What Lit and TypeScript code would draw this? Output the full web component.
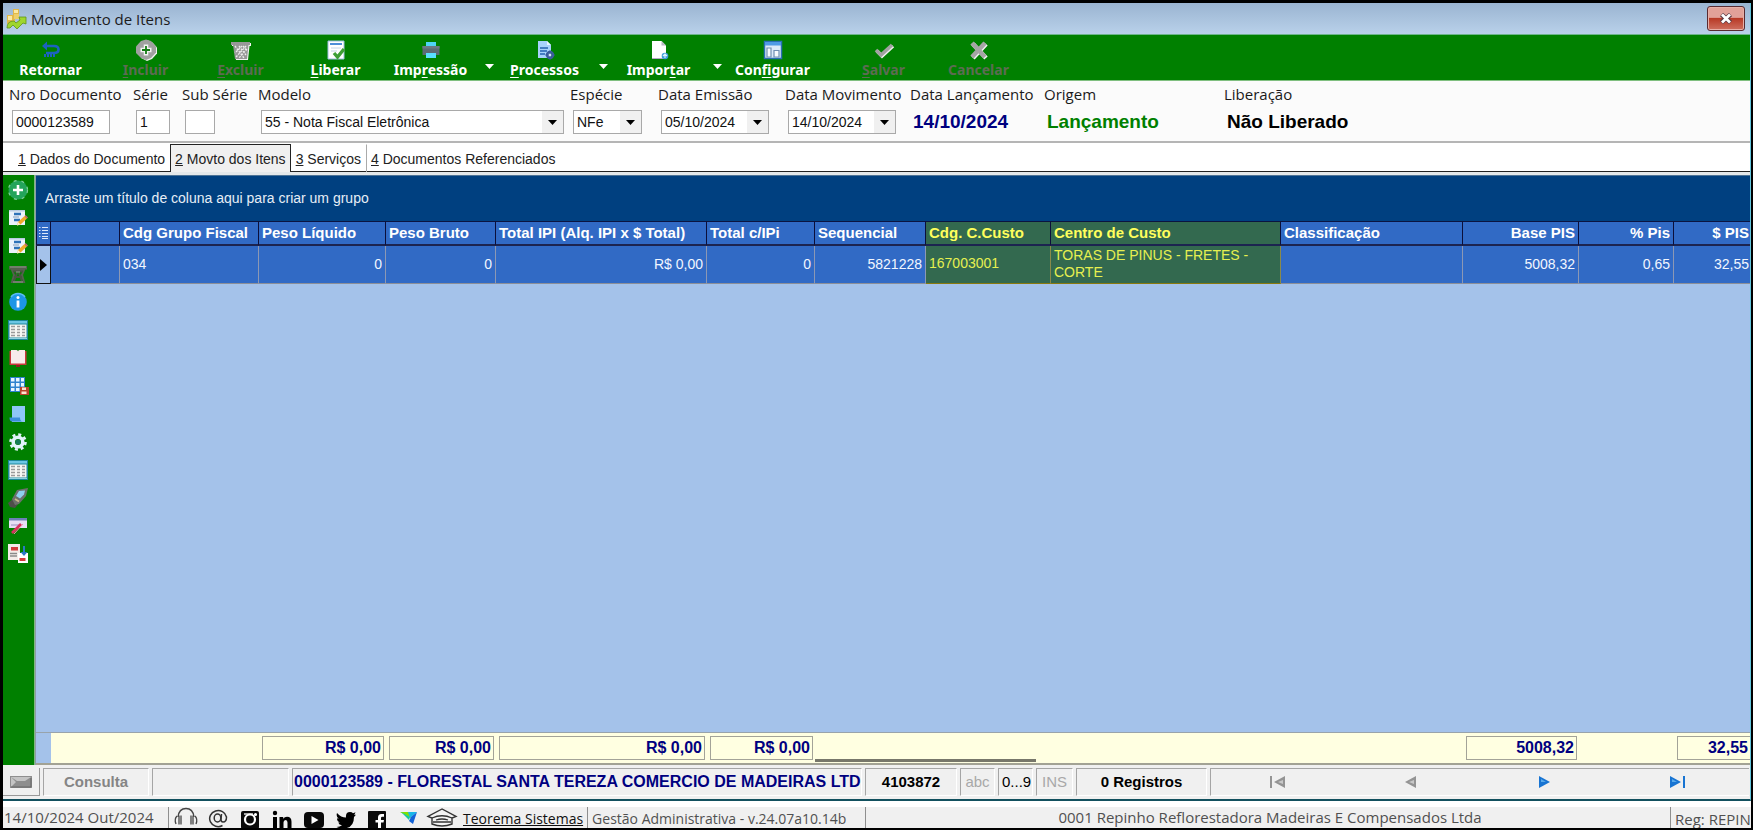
import { LitElement, html, css, svg, nothing } from "lit";
import { customElement } from "lit/decorators.js";
import { classMap } from "lit/directives/class-map.js";

interface ToolItem {
  icon: unknown;
  before: string;
  key: string;
  after: string;
  disabled?: boolean;
  menu?: boolean;
  spaced?: boolean;
}

interface Column {
  title: string;
  width: number;
  value: string;
  total?: string;
  right?: boolean;
  rightTitle?: boolean;
  mark?: boolean;
}

const icon = (body: unknown, size = 20) =>
  html`<svg width=${size} height=${size} viewBox="0 0 20 20" overflow="visible" aria-hidden="true">${body}</svg>`;

const tools: ToolItem[] = [
  {
    icon: icon(svg`<path d="M4 6h9q4.500 0 4.500 3.500T13 13H5" fill="none" stroke="#1c62c0" stroke-width="2.600"/><path d="M6 1.500 1 6l5 4.500z" fill="#1c62c0"/><path d="M3 15.500h2M6 15.500h2M9 15.500h2M12 15.500h2" stroke="#1c62c0" stroke-width="3"/>`),
    before: "Retornar", key: "", after: "",
  },
  {
    icon: icon(svg`<path d="m11 0 5.500 2.500 4.500 5v6l-5 5.500-5 2-6-3z" fill="#eef2ee"/><path d="m10-.500 5 1.500 5 5.500v6l-5 5.500-5 2-5-2-5-5v-6.500L5 1z" fill="#a0a0a0"/><path d="M10 4.500v11M4.500 10h11" stroke="#f4f4f4" stroke-width="4.500"/><path d="M10 6v8M6 10h8" stroke="#157a15" stroke-width="1.800"/>`),
    before: "", key: "I", after: "ncluir", disabled: true,
  },
  {
    icon: icon(svg`<path d="M1 3h19v3h-1.500L17 20H5L3 6H1z" fill="#f2f2f2"/><path d="M0 2h19v3h-1.500L16 19H4L2 5H0z" fill="#989898"/><path d="m4 6 9 12M8 6l7 9M12 6l4 5M15 6 5 17M11 6l-7 7M16 9l-8 9" fill="none" stroke="#eee" stroke-width="1.300" stroke-dasharray="2 1.200"/>`),
    before: "", key: "E", after: "xcluir", disabled: true,
  },
  {
    icon: icon(svg`<path d="M2 1h16v18H2z" fill="#fff" stroke="#9cbfe0"/><path d="M4 3h12v2H4z" fill="#4f8fd8"/><path d="M5 8h10M5 11h6" stroke="#c6d4e4"/><path d="m8 13 3.500 4L18 9" fill="none" stroke="#3e9f35" stroke-width="3.400"/>`),
    before: "", key: "L", after: "iberar",
  },
  {
    icon: icon(svg`<path d="M5 2h10v6H5z" fill="#50d5f5"/><path d="M1.500 6h17v9h-17z" fill="#5c6b75"/><path d="M1.500 6h17v2.500h-17z" fill="#6c7a84"/><path d="M5 13h10v5H5z" fill="#58e0ff"/>`),
    before: "Imp", key: "r", after: "essão", menu: true,
  },
  {
    icon: icon(svg`<path d="M3 1h9l4 4v13H3z" fill="#a7d2fb"/><path d="M12 1v4h4z" fill="#e8f4ff"/><path d="M5 8h8M5 11h7M5 14h5" stroke="#2563b0" stroke-width="1.500"/><circle cx="15" cy="15" r="3" fill="none" stroke="#3b5c9c" stroke-width="2.400"/><path d="M15 10.500v9M10.500 15h9" stroke="#3b5c9c" stroke-width="1.400"/><circle cx="15" cy="15" r="1.300" fill="#d6e8f8"/>`),
    before: "", key: "P", after: "rocessos", menu: true,
  },
  {
    icon: icon(svg`<path d="M3 1h9.500L17 5.500V19H3z" fill="#fff"/><path d="M12.500 1v4.500H17z" fill="#b8b8c4"/><path d="M3 18.500h11" stroke="#b5a9c5"/><circle cx="16" cy="16" r="3.300" fill="#3f9ed8"/><path d="m14 16 2-2 2 2M16 14v4" fill="none" stroke="#d9f2ff" stroke-width="1.200"/>`),
    before: "Impor", key: "t", after: "ar", menu: true,
  },
  {
    icon: icon(svg`<path d="M1.500 1.500h17v17h-17z" fill="#dceafa" stroke="#2b6fb5" stroke-width="1.500"/><path d="M2 2h16v3.500H2z" fill="#4f9be6"/><path d="M4 8h4v9H4zM11 10.500h5V17h-5z" fill="#f7fbff" stroke="#6f8fb4" stroke-width="1.200"/>`),
    before: "Con", key: "f", after: "igurar",
  },
  {
    icon: icon(svg`<path d="m3 11 5 5L19 6" fill="none" stroke="#f0f0f0" stroke-width="3.500"/><path d="m2 10 5 5L18 5" fill="none" stroke="#a2a2a2" stroke-width="3.500"/>`),
    before: "", key: "S", after: "alvar", disabled: true, spaced: true,
  },
  {
    icon: icon(svg`<path d="m4 4 13 14M17 4 4 18" stroke="#f2f2f2" stroke-width="4.500"/><path d="m3 3 13 14M16 3 3 17" stroke="#a5a5a5" stroke-width="4.500"/>`),
    before: "Cancelar", key: "", after: "", disabled: true,
  },
];

const listIcon = svg`<path d="M0 0h20v20H0z" fill="#1d8799"/><path d="M1.500 4.500h17v13h-17z" fill="#f6f6f2"/><path d="M1 1h18v2.500H1z" fill="#6cc6e4"/><path d="M3 6.500h4M9 6.500h3M14 6.500h3M3 9.500h4M9 9.500h3M14 9.500h3M3 12.500h4M9 12.500h3M14 12.500h3M3 15.500h4M9 15.500h3M14 15.500h3" stroke="#9a9a9a" stroke-width="1.300"/><path d="M1 18.500h18" stroke="#8fd0e0"/>`;
const editIcon = svg`<path d="M1 2h16v15H1z" fill="#eaf2fb"/><path d="M1 2h16v1.500H1z" fill="#b7cbe0"/><path d="M6 6h7M6 12h6" stroke="#2d72b8" stroke-width="2.600"/><path d="M5 9h6" stroke="#9fb4cc" stroke-width="1.400"/><path d="m9 17.500 1-3.500 6.500-6 2.500 2.500-6.500 6z" fill="#f0a92c"/><path d="m9 17.500 1-3.500 2.500 2.500z" fill="#fff3d8"/><path d="m16.500 8 1-1 2.500 2.500-1 1z" fill="#c9657a"/>`;

const sideItems: { name: string; body: unknown }[] = [
  { name: "Incluir item", body: svg`<circle cx="10" cy="10" r="9.500" fill="#23a45a"/><circle cx="10" cy="10" r="9.500" fill="none" stroke="#7fcf9c" stroke-width="1.200" stroke-dasharray="3 5"/><path d="M10 5v10M5 10h10" stroke="#fff" stroke-width="2.600"/>` },
  { name: "Editar item", body: editIcon },
  { name: "Editar itens", body: editIcon },
  { name: "Excluir item", body: svg`<path d="M1 2h18v3.500H1z" fill="#55604f"/><path d="m4 6 2 5-2 7h12l-2-7 2-5z" fill="none" stroke="#55604f" stroke-width="2"/><path d="M5 7.500h10M6 17l3-8M14 17l-3-8M6 13h8" stroke="#47543f" stroke-width="2"/><path d="M2 3h16M8 8h4M5 18h10" stroke="#8f9c8a" stroke-width="1"/>` },
  { name: "Informações", body: svg`<circle cx="10" cy="10" r="8.800" fill="#1d96e6"/><path d="M3 5a8.800 8.800 0 0 1 14 0" fill="none" stroke="#5bbcf4" stroke-width="1.500"/><circle cx="10" cy="5.500" r="1.500" fill="#fff"/><path d="M10 8.500v7" stroke="#fff" stroke-width="2.800"/>` },
  { name: "Lista", body: listIcon },
  { name: "Livro", body: svg`<path d="M1.500 3h17v14h-17z" fill="#c8393b"/><path d="M3 2h5.500q1.500 0 1.500 1.500Q10 2 11.500 2H17v13.500H3z" fill="#f7eceb"/><path d="M8 17h4v2H8z" fill="#8f1f22"/>` },
  { name: "Salvar grade", body: svg`<path d="M2 1h15v15H2z" fill="#2f83cf"/><path d="M3 2h3.500v3.500H3zM8 2h3.500v3.500H8zM13 2h3v3.500h-3zM3 7h3.500v3.500H3zM8 7h3.500v3.500H8zM13 7h3v3.500h-3zM3 12h3.500v3H3zM8 12h3.500v3H8z" fill="#e8f5ff"/><path d="M12 11h9v8h-9z" fill="#b8432b"/><path d="M14 11.500h4v2.500h-4zM13.500 15.500h5V18h-5z" fill="#ffe3d0"/>` },
  { name: "Nota", body: svg`<path d="M4 2h13v16H4z" fill="#8ec6f7"/><path d="M1.500 13.500H12q0 4 3 4H4q-2.500 0-2.500-4z" fill="#3c8fdb"/>` },
  { name: "Configurações", body: svg`<circle cx="10" cy="10" r="4.800" fill="none" stroke="#e2f4fb" stroke-width="3.600"/><circle cx="10" cy="10" r="7.500" fill="none" stroke="#e2f4fb" stroke-width="2.600" stroke-dasharray="3 2.890"/><circle cx="10" cy="10" r="2.600" fill="#157a5a"/>` },
  { name: "Lista de itens", body: listIcon },
  { name: "Coletor", body: svg`<path d="m0 15 5-4 6 4-4 5-5-1z" fill="#4e4e4a"/><path d="m4 11 5-9 11-2-2 8-7 8-4 1z" fill="#6d706c"/><path d="m8 8 3-5 6-.500-1 4-4 4z" fill="#8fd0ef"/><path d="m7 11 4 2.500" stroke="#c9b98a" stroke-width="1.800"/>` },
  { name: "Assinatura", body: svg`<path d="M1 2h18v10H1z" fill="#e6dff6"/><path d="M1 2h18v2.500H1z" fill="#6d7fb8"/><path d="M3 9h10" stroke="#a59cc8" stroke-width="1.200"/><path d="m4 17 9-9" stroke="#d8315f" stroke-width="2.600"/><path d="m6 18 9-10" stroke="#f08fa8" stroke-width="1"/>` },
  { name: "Trocar documento", body: svg`<path d="M0 0h12v16H0z" fill="#f3ece8"/><path d="M3 3h7v3.500H3z" fill="#d33b3b"/><path d="M2 9.500h7M2 12h7" stroke="#8a8a8a" stroke-width="1.300"/><path d="M10 9h10v10H10z" fill="#fff"/><path d="M11.500 14h6v3h-6z" fill="#d33b3b"/><path d="M15 2h2v6h2.500L16 12l-3.500-4H15z" fill="#2b78c4"/>` },
];

const columns: Column[] = [
  { title: "", width: 69, value: "" },
  { title: "Cdg Grupo Fiscal", width: 139, value: "034" },
  { title: "Peso Líquido", width: 127, value: "0", total: "R$ 0,00", right: true },
  { title: "Peso Bruto", width: 110, value: "0", total: "R$ 0,00", right: true },
  { title: "Total IPI (Alq. IPI x $ Total)", width: 211, value: "R$ 0,00", total: "R$ 0,00", right: true },
  { title: "Total c/IPi", width: 108, value: "0", total: "R$ 0,00", right: true },
  { title: "Sequencial", width: 111, value: "5821228", right: true },
  { title: "Cdg. C.Custo", width: 125, value: "167003001", mark: true },
  { title: "Centro de Custo", width: 230, value: "TORAS DE PINUS - FRETES - CORTE", mark: true },
  { title: "Classificação", width: 182, value: "" },
  { title: "Base PIS", width: 116, value: "5008,32", total: "5008,32", right: true, rightTitle: true },
  { title: "% Pis", width: 95, value: "0,65", right: true, rightTitle: true },
  { title: "$ PIS", width: 79, value: "32,55", total: "32,55", right: true, rightTitle: true },
];

const colgroup = () => html`<colgroup>
  <col style="width:15px" />
  ${columns.map((c) => html`<col style="width:${c.width}px" />`)}
</colgroup>`;

const caret = html`<svg class="caret" width="9" height="5" viewBox="0 0 9 5" aria-hidden="true"><path d="M0 0h9L4.500 5z" fill="currentColor"/></svg>`;

@customElement("erp-toolbar")
export class ErpToolbar extends LitElement {
  static styles = css`
    :host {
      display: flex;
      background: #008000;
      border-top: 1px solid #6db58c;
      border-bottom: 1px solid #7fbf7f;
      font: bold 14px/18px "Noto Sans", sans-serif;
    }
    .tool {
      width: 95px;
      height: 45px;
      padding: 5px 0 0;
      border: 0;
      background: none;
      color: #fff;
      font: inherit;
      display: flex;
      flex-direction: column;
      align-items: center;
      gap: 1px;
    }
    .tool:disabled { color: #5c6c52; }
    .spaced { margin-left: 16px; }
    .menu {
      width: 19px;
      padding: 13px 0 0 4px;
      border: 0;
      background: none;
      color: #fff;
    }
    u { text-underline-offset: 2px; }
  `;
  render() {
    return tools.map(
      (t) => html`<button class=${classMap({ tool: true, spaced: !!t.spaced })} ?disabled=${!!t.disabled}>
          ${t.icon}<span>${t.before}${t.key ? html`<u>${t.key}</u>` : nothing}${t.after}</span>
        </button>${t.menu ? html`<button class="menu" aria-label="Mais opções">${caret}</button>` : nothing}`
    );
  }
}

@customElement("erp-form")
export class ErpForm extends LitElement {
  static styles = css`
    :host {
      display: grid;
      grid-template-columns: 124px 49px 76px 312px 88px 127px 125px 134px 180px 1fr;
      padding: 3px 0 7px 6px;
      background: #fbfbfb;
      border-bottom: 2px solid #b5b5b5;
      font: 15px/20px "Open Sans", sans-serif;
      color: #1a1a1a;
    }
    .field {
      display: flex;
      flex-direction: column;
      gap: 6px;
      white-space: nowrap;
    }
    .box {
      box-sizing: border-box;
      display: grid;
      height: 24px;
      margin-left: 3px;
      border: 1px solid #a9a9a9;
      background: #fff;
    }
    .box.pick { grid-template-columns: 1fr 21px; }
    .doc { width: 98px; }
    .serie { width: 34px; }
    .sub { width: 30px; }
    .modelo { width: 303px; }
    .especie { width: 69px; }
    .data { width: 108px; }
    input, select {
      min-width: 0;
      width: 100%;
      box-sizing: border-box;
      border: 0;
      margin: 0;
      padding: 0 3px;
      background: none;
      outline: 0;
      appearance: none;
      color: #111;
      font: 14px/20px "Liberation Sans", sans-serif;
    }
    select { grid-area: 1 / 1 / 2 / 3; }
    .drop {
      grid-area: 1 / 2;
      display: grid;
      place-items: center;
      padding: 0;
      border: 0;
      background: #f0f0f0;
      color: #000;
      pointer-events: none;
    }
    .value {
      margin-left: 3px;
      font: bold 19px/24px "Liberation Sans", sans-serif;
    }
    .navy { color: #000080; }
    .green { color: #008000; }
    .black { color: #000; }
  `;
  private text(id: string, label: string, cls: string, value: string) {
    return html`<div class="field"><label for=${id}>${label}</label>
      <span class="box ${cls}"><input id=${id} .value=${value} /></span></div>`;
  }
  private choice(id: string, label: string, cls: string, value: string) {
    return html`<div class="field"><label for=${id}>${label}</label>
      <span class="box pick ${cls}"><select id=${id}><option>${value}</option></select><span class="drop">${caret}</span></span></div>`;
  }
  private date(id: string, label: string, value: string) {
    return html`<div class="field"><label for=${id}>${label}</label>
      <span class="box pick data"><input id=${id} .value=${value} /><button class="drop" aria-label="Abrir calendário">${caret}</button></span></div>`;
  }
  private out(label: string, cls: string, value: string) {
    return html`<div class="field"><span>${label}</span><output class="value ${cls}">${value}</output></div>`;
  }
  render() {
    return html`
      ${this.text("doc", "Nro Documento", "doc", "0000123589")}
      ${this.text("serie", "Série", "serie", "1")}
      ${this.text("sub", "Sub Série", "sub", "")}
      ${this.choice("modelo", "Modelo", "modelo", "55 - Nota Fiscal Eletrônica")}
      ${this.choice("especie", "Espécie", "especie", "NFe")}
      ${this.date("emissao", "Data Emissão", "05/10/2024")}
      ${this.date("movimento", "Data Movimento", "14/10/2024")}
      ${this.out("Data Lançamento", "navy", "14/10/2024")}
      ${this.out("Origem", "green", "Lançamento")}
      ${this.out("Liberação", "black", "Não Liberado")}
    `;
  }
}

@customElement("erp-grid")
export class ErpGrid extends LitElement {
  static styles = css`
    :host {
      display: flex;
      flex-direction: column;
      min-width: 0;
      overflow: hidden;
      background: #a4c2ea;
      border-left: 1px solid #8d9ba8;
      font: 14px/16px "Liberation Sans", sans-serif;
    }
    .group {
      padding: 14px 9px 15px;
      background: #004080;
      border-top: 1px solid #4d7396;
      color: #e6eef6;
    }
    table {
      table-layout: fixed;
      width: 0;
      border-collapse: separate;
      border-spacing: 0;
      flex: none;
    }
    th, td {
      box-sizing: border-box;
      padding: 0 3px;
      text-align: left;
      overflow: hidden;
      white-space: nowrap;
    }
    th {
      height: 25px;
      background: #316ac5;
      border-right: 1px solid #0b0f3a;
      border-top: 1px solid #0b1440;
      border-bottom: 2px solid #1c2450;
      color: #fff;
      font: bold 15px/20px "Liberation Sans", sans-serif;
    }
    .lines {
      padding: 0 2px;
      border-left: 1px solid #0b0f3a;
    }
    .lines svg { display: block; }
    td {
      height: 38px;
      padding-bottom: 2px;
      background: #316ac5;
      border-right: 1px solid #8c98b4;
      border-bottom: 1px solid #8c8f98;
      color: #f2f6ff;
    }
    .mark {
      background: #33694f;
      color: #ffff5c;
    }
    td.mark {
      white-space: normal;
      line-height: 17px;
      border-right-color: #8a8a4a;
      border-bottom-color: #8a7a10;
      color: #e6f050;
    }
    .pointer {
      padding: 0 3px;
      background: #a4c2ea;
      border: 1px solid #111;
      border-top: 0;
    }
    .pointer svg { display: block; }
    .right { text-align: right; }
    .space { flex: 1; }
    .totals {
      position: relative;
      background: #ffffe1;
      border-top: 1px solid #98a3ab;
      border-bottom: 2px solid #a2a294;
    }
    .totals td {
      height: 30px;
      padding: 0 2px 0 3px;
      border: 0;
      background: none;
    }
    .totals td.corner { background: #a4c2ea; }
    .totals output {
      display: block;
      box-sizing: border-box;
      height: 24px;
      padding: 0 2px;
      border: 1px solid #a3a398;
      color: #000080;
      font: bold 16px/22px "Liberation Sans", sans-serif;
      text-align: right;
    }
    .thumb {
      position: absolute;
      left: 779px;
      bottom: 1px;
      width: 221px;
      height: 3px;
      background: #77776a;
    }
  `;
  render() {
    return html`
      <div class="group">Arraste um título de coluna aqui para criar um grupo</div>
      <table>
        ${colgroup()}
        <thead><tr>
          <th class="lines" aria-label="Colunas"><svg width="9" height="14" viewBox="0 0 9 14"><path d="M3 1.500h6M3 4.500h6M3 7.500h6M3 10.500h6M3 12.500h6M0 1.500h1.500M0 4.500h1.500M0 7.500h1.500M0 10.500h1.500" stroke="#dfe9fb"/></svg></th>
          ${columns.map((c) => html`<th class=${classMap({ right: !!c.rightTitle, mark: !!c.mark })}>${c.title}</th>`)}
        </tr></thead>
        <tbody><tr>
          <td class="pointer"><svg width="7" height="12" viewBox="0 0 7 12"><path d="M0 0v12l7-6z"/></svg></td>
          ${columns.map((c) => html`<td class=${classMap({ right: !!c.right, mark: !!c.mark })}>${c.value}</td>`)}
        </tr></tbody>
      </table>
      <div class="space"></div>
      <div class="totals">
        <table>
          ${colgroup()}
          <tbody><tr>
            <td class="corner"></td>
            ${columns.map((c) => html`<td>${c.total ? html`<output>${c.total}</output>` : nothing}</td>`)}
          </tr></tbody>
        </table>
        <div class="thumb"></div>
      </div>
    `;
  }
}

@customElement("erp-status")
export class ErpStatus extends LitElement {
  static styles = css`
    :host {
      display: grid;
      grid-template-columns: 37px 106px 137px 570px 92px 35px 35px 37px 131px 1fr;
      gap: 3px;
      padding: 3px 1px 3px 0;
      background: #f0f0f0;
      font: 15px/25px "Liberation Sans", sans-serif;
      color: #000;
    }
    .cell {
      box-sizing: border-box;
      height: 28px;
      padding: 0 3px;
      border: 1px solid #a5a5a5;
      border-right-color: #fff;
      border-bottom-color: #fff;
      text-align: center;
      white-space: nowrap;
      overflow: hidden;
    }
    .key {
      border: 0;
      border-right: 1px solid #999;
      border-bottom: 1px solid #999;
      background: none;
      display: grid;
      place-items: center;
    }
    .bold { font-weight: bold; }
    .gray { color: #858585; }
    .soft { color: #a8a8a8; }
    .name {
      color: #000080;
      font-weight: bold;
      font-size: 16px;
      text-align: left;
      padding: 0 1px;
    }
    .nav {
      display: grid;
      grid-template-columns: repeat(4, 1fr);
      border-right: 0;
      padding: 0 5px 0 0;
    }
    .nav button {
      padding: 0;
      border: 0;
      background: none;
      color: #1874d2;
      display: grid;
      place-items: center;
    }
    .nav button:disabled { color: #949494; }
  `;
  render() {
    return html`
      <button class="cell key" aria-label="Painel"><svg width="22" height="12" viewBox="0 0 22 12"><path d="M0 0h22v12H0z" fill="#8e8e8e"/><path d="M1 1h20L15 5H7zM1 1v10l5-5z" fill="#c4c4c4"/><path d="M1 11h20V2" fill="none" stroke="#666"/></svg></button>
      <span class="cell bold gray">Consulta</span>
      <span class="cell"></span>
      <span class="cell name">0000123589 - FLORESTAL SANTA TEREZA COMERCIO DE MADEIRAS LTD</span>
      <span class="cell bold">4103872</span>
      <span class="cell soft">abc</span>
      <span class="cell">0...9</span>
      <span class="cell soft">INS</span>
      <span class="cell bold">0 Registros</span>
      <span class="cell nav">
        <button disabled aria-label="Primeiro"><svg width="15" height="12" viewBox="0 0 15 12"><path d="M0 0h2v12H0zM15 0v12L4 6z" fill="currentColor"/><path d="m13 4-5 2 5 2z" fill="#c8c8c8"/></svg></button>
        <button disabled aria-label="Anterior"><svg width="11" height="12" viewBox="0 0 11 12"><path d="M11 0v12L0 6z" fill="currentColor"/><path d="M9 4 4 6l5 2z" fill="#c8c8c8"/></svg></button>
        <button aria-label="Próximo"><svg width="11" height="12" viewBox="0 0 11 12"><path d="M0 0v12l11-6z" fill="currentColor"/><path d="m2 3 5 3H2z" fill="#5aabec"/></svg></button>
        <button aria-label="Último"><svg width="15" height="12" viewBox="0 0 15 12"><path d="M13 0h2v12h-2zM0 0v12l11-6z" fill="currentColor"/><path d="m2 3 5 3H2z" fill="#5aabec"/></svg></button>
      </span>
    `;
  }
}

const social: { name: string; body: unknown }[] = [
  { name: "Suporte", body: svg`<path d="M2 10Q3 1.500 10 1.500T18 10" fill="none" stroke="#444" stroke-width="1.400"/><path d="M1 9q-3 3-1 8M5 8.500v9M3 8.500v9M19 9q3 3 1 8M15 8.500v9M17 8.500v9" fill="none" stroke="#444" stroke-width="1.300"/>` },
  { name: "E-mail", body: svg`<ellipse cx="9.500" cy="11" rx="3.300" ry="4" fill="none" stroke="#333" stroke-width="1.500"/><path d="M13.500 7 13 12.500q0 2.500 2 2.500 3.500 0 3.500-5a8.500 8 0 1 0-4 8.500" fill="none" stroke="#333" stroke-width="1.500"/>` },
  { name: "Instagram", body: svg`<rect x="1" y="4" width="18" height="18" rx="2" fill="#0a0a0a"/><circle cx="10" cy="12.500" r="5" fill="none" stroke="#fff" stroke-width="2.200"/><path d="M4 7h9" stroke="#fff" stroke-width="1.300"/><circle cx="15.500" cy="7.500" r="1.600" fill="#fff"/>` },
  { name: "LinkedIn", body: svg`<circle cx="3" cy="6" r="2.200"/><path d="M1 10h4v12H1zM7.500 10h3.700v1.700Q12.500 9.700 15 9.700q4.500 0 4.500 5V22h-4v-6.500q0-2.600-1.900-2.600-2.100 0-2.100 2.600V22h-4z"/>` },
  { name: "YouTube", body: svg`<rect x="0" y="5" width="20" height="16" rx="4" fill="#0a0a0a"/><path d="M7.500 9v8l7-4z" fill="#fff"/>` },
  { name: "Twitter", body: svg`<path transform="translate(0 2)" d="M1 4q4 4.500 9 4.500Q9.500 3 14 3q2 0 3 1.300L19.500 3.300 18.300 6l1.700-.300-2 2.300q0 11-10.500 11.500Q3 19.500.500 18q3.500 0 5.500-1.700-3-.300-3.800-2.800h1.700Q1 12.500 1 9.300l1.700.500Q-.200 7.500 1 4z"/>` },
  { name: "Facebook", body: svg`<rect x="0" y="4" width="18" height="18" rx="1" fill="#0a0a0a"/><path d="M10 22v-6.500H7.500V13H10v-2.500Q10 7 13.500 7H16v2.700h-1.700q-1.300 0-1.300 1.200V13h3l-.500 2.500H13V22z" fill="#fff"/>` },
  { name: "Teorema", body: svg`<path d="M0 5h9l2 6z" fill="#7fe000"/><path d="M8 5h9l-7 6z" fill="#19b6e8"/><path d="m17 5-4 12-4-3 2-4z" fill="#1263d8"/><path d="m1 5 9 5-1 3z" fill="#12c8a0"/>` },
  { name: "Universidade", body: svg`<path d="M10 2-4 9.500l4 1.500v6q10 4 20 0v-6l4-1.500z" fill="#f4f4f4" stroke="#333" stroke-width="1.400"/><path d="M0 11q10-4.500 20 0M1 15h18M4 13q6-2 12 0" fill="none" stroke="#333" stroke-width="1.300"/>` },
];

@customElement("erp-taskbar")
export class ErpTaskbar extends LitElement {
  static styles = css`
    :host {
      display: flex;
      height: 21px;
      overflow: hidden;
      border-top: 6px solid #fff;
      background: #f0f0f0;
      color: #505050;
      font: 15px/20px "Open Sans", sans-serif;
      white-space: nowrap;
    }
    .part {
      padding-left: 4px;
      border-left: 1px solid #8f8f8f;
    }
    .date {
      width: 164px;
      padding-left: 1px;
      border: 0;
    }
    .icons {
      display: flex;
      gap: 12px;
      padding: 0 11px 0 7px;
    }
    .icons svg { display: block; }
    a { color: #111; }
    .link {
      padding-right: 4px;
      font-size: 14px;
    }
    .app {
      width: 273px;
      font-size: 14px;
    }
    .app, .reg, .link { line-height: 24px; }
    .company {
      flex: 1;
      text-align: center;
    }
    .reg { width: 76px; }
  `;
  render() {
    return html`
      <span class="part date">14/10/2024 Out/2024</span>
      <span class="part icons">${social.map((s) => html`<a href="#" aria-label=${s.name}>${icon(s.body)}</a>`)}</span>
      <span class="link"><a href="#">Teorema Sistemas</a></span>
      <span class="part app">Gestão Administrativa - v.24.07a10.14b</span>
      <span class="part company">0001 Repinho Reflorestadora Madeiras E Compensados Ltda</span>
      <span class="part reg">Reg: REPIN</span>
    `;
  }
}

@customElement("app-root")
export class AppRoot extends LitElement {
  static styles = css`
    :host {
      box-sizing: border-box;
      display: flex;
      flex-direction: column;
      height: 100vh;
      padding: 3px 2px 2px 3px;
      background: #000;
      overflow: hidden;
    }
    .window {
      flex: 1;
      min-height: 0;
      display: flex;
      flex-direction: column;
      border-right: 1px solid #62c4dc;
      border-bottom: 2px solid #12505e;
    }
    .title {
      display: flex;
      align-items: center;
      gap: 5px;
      height: 31px;
      padding: 0 5px 0 3px;
      background: linear-gradient(#9ab4d1, #b9d1ea);
      color: #1c1c1c;
      font: 15px/20px "Open Sans", sans-serif;
    }
    h1 {
      flex: 1;
      margin: 0;
      font: inherit;
    }
    .close {
      width: 38px;
      height: 25px;
      padding: 0;
      border: 1px solid #5a2a30;
      border-radius: 3px;
      box-shadow: inset 0 0 0 1px #e8b0a8;
      background: linear-gradient(#e2a198 0 45%, #b83a26 50%, #cf7060);
      display: grid;
      place-items: center;
    }
    .tabs {
      display: flex;
      align-items: flex-end;
      padding: 1px 0 0 10px;
      background: #fff;
      border-bottom: 1px solid #222;
      font: 14px/18px "Liberation Sans", sans-serif;
    }
    .tab {
      margin: 0 0 -1px;
      padding: 5px 4px 4px;
      border: 1px solid transparent;
      border-bottom: 0;
      background: none;
      color: #222;
      font: inherit;
    }
    .tab.on {
      background: #f0f0f0;
      border-color: #222;
    }
    .tab + .last { border-left-color: #aaa; }
    .body {
      flex: 1;
      min-height: 0;
      display: grid;
      grid-template-columns: 32px 1fr;
      border-top: 3px solid #e4e8ea;
    }
    .side {
      display: flex;
      flex-direction: column;
      align-items: flex-start;
      gap: 8px;
      padding: 5px 0 0 5px;
      background: #008000;
      border-right: 1px solid #7fba7f;
    }
    .side button {
      padding: 0;
      border: 0;
      background: none;
      display: block;
      height: 20px;
    }
  `;
  render() {
    const tab = (n: string, t: string, cls = "") =>
      html`<button role="tab" class="tab ${cls}" aria-selected=${cls === "on"}><u>${n}</u> ${t}</button>`;
    return html`
      <div class="window">
        <header class="title">
          ${icon(svg`<path d="M7 0h6v6H7zM1 6h8v9H1z" fill="#e2b94a"/><path d="M8 1h4v3H8zM2 7h4v4H2z" fill="#fbe9a6"/><path d="M8 5h5v5H8z" fill="#edcf6c"/><path d="M1 19q0-7 7-7l2 2 4-3-1-3h7v7l-3-1-6 6-4-4-3 3z" fill="#9fd62e" stroke="#5f9418" stroke-width=".800"/>`)}
          <h1>Movimento de Itens</h1>
          <button class="close" aria-label="Fechar"><svg width="12" height="11" viewBox="0 0 12 11"><path d="m1.500 1.500 9 8M10.500 1.500l-9 8" stroke="#5b3a44" stroke-width="4.600"/><path d="m2 1.500 8 8M10 1.500l-8 8" stroke="#fff" stroke-width="2.800"/></svg></button>
        </header>
        <erp-toolbar></erp-toolbar>
        <erp-form></erp-form>
        <nav class="tabs" role="tablist">
          ${tab("1", "Dados do Documento")}${tab("2", "Movto dos Itens", "on")}${tab("3", "Serviços")}${tab("4", "Documentos Referenciados", "last")}
        </nav>
        <main class="body">
          <aside class="side">
            ${sideItems.map((s) => html`<button aria-label=${s.name}>${icon(s.body)}</button>`)}
          </aside>
          <erp-grid></erp-grid>
        </main>
        <erp-status></erp-status>
      </div>
      <erp-taskbar></erp-taskbar>
    `;
  }
}
